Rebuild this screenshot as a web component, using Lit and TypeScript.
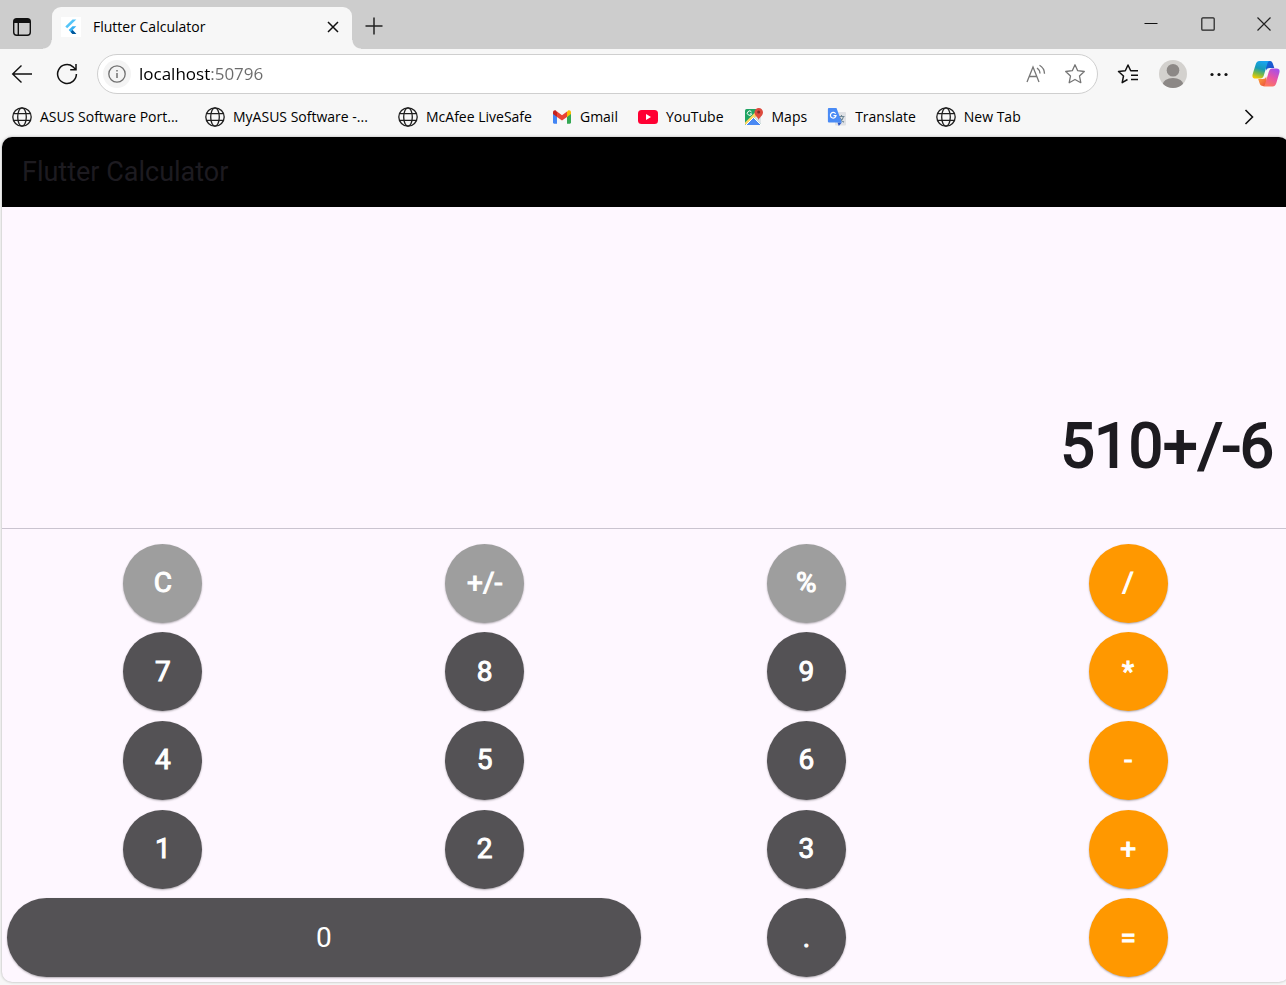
import { LitElement, html, css } from "lit";
import { customElement, property, state } from "lit/decorators.js";
import { classMap } from "lit/directives/class-map.js";

const globe = html`<svg width="20" height="20" viewBox="0 0 20 20" fill="none" stroke="#1f1f1f" stroke-width="1.3" aria-hidden="true">
  <circle cx="10" cy="10" r="9.2" />
  <ellipse cx="10" cy="10" rx="4.3" ry="9.2" />
  <path d="M1.6 6.7H18.4M1.6 13.3H18.4" />
</svg>`;

const gmail = html`<svg width="20" height="20" viewBox="0 0 20 20" aria-hidden="true">
  <path d="M1 5.2v10.3c0 .7.5 1.2 1.2 1.2H5V9.4z" fill="#4285f4" />
  <path d="M15 9.4v7.3h2.8c.7 0 1.2-.5 1.2-1.2V5.2z" fill="#34a853" />
  <path d="M15 4.7v5.2l4-3V5.3c0-1.700-1.900-2.500-3.100-1.500z" fill="#fbbc04" />
  <path d="M5 9.900V4.600l5 3.700 5-3.700v5.300l-5 3.700z" fill="#ea4335" />
  <path d="M1 5.300v1.600l4 3V4.700l-.9-.9C2.900 2.800 1 3.600 1 5.300z" fill="#c5221f" />
</svg>`;

const youtube = html`<svg width="20" height="20" viewBox="0 0 20 20" aria-hidden="true">
  <rect x="0" y="3" width="20" height="14" rx="3.500" fill="#ff0033" />
  <path d="M8 7v6l5-3z" fill="#fff" />
</svg>`;

const maps = html`<svg width="20" height="20" viewBox="0 0 20 20" aria-hidden="true">
  <rect x="1" y="2" width="16" height="16" rx="1.500" fill="#1fa463" />
  <path d="M17 5v12.500L10 10.500z" fill="#dfe3e6" />
  <path d="M1 15.500 13 3.500l2.500 2.500L3 18.200 1 17z" fill="#fdd663" />
  <path d="M2 18 9.500 10.500 17 18z" fill="#4a89f3" />
  <path d="M2 18 9.500 10.500 17 18" stroke="#fff" stroke-width="1" fill="none" />
  <path d="M7.500 5A2.200 2.200 0 1 0 7.700 6.900H6" fill="none" stroke="#fff" stroke-width="1" />
  <path d="M14.700 13.200c-.3-3-4.200-4.200-4.200-8A4.200 4.200 0 0 1 19 5.200c0 3.800-4 5-4.300 8z" fill="#dd4b3e" />
  <circle cx="14.700" cy="5" r="1.500" fill="#822b25" />
</svg>`;

const translate = html`<svg width="20" height="20" viewBox="0 0 20 20" aria-hidden="true">
  <rect x="8" y="5" width="11" height="13.500" rx="1" fill="#dfe1e5" />
  <path d="M11.500 9.500h6M14.500 8v1.500M16.500 9.700c-.6 2.600-2 4.300-4 5.600M12.800 10.500c.8 2 2.300 3.700 4.200 4.700" stroke="#6f8794" stroke-width="1.100" fill="none" />
  <path d="M10.500 15.500h4.300L11.800 19z" fill="#2a56c6" />
  <path d="M2 1h7.500l5.300 14.500H2A1.100 1.100 0 0 1 .9 14.400V2.100C.9 1.500 1.400 1 2 1z" fill="#4a8bf5" />
  <path d="M8.600 6.700A2.800 2.800 0 1 0 9 8.700H6.500" fill="none" stroke="#fff" stroke-width="1.200" />
</svg>`;

const bookmarks = [
  { label: "ASUS Software Port...", icon: globe, wide: true },
  { label: "MyASUS Software -...", icon: globe, wide: true },
  { label: "McAfee LiveSafe", icon: globe },
  { label: "Gmail", icon: gmail },
  { label: "YouTube", icon: youtube },
  { label: "Maps", icon: maps },
  { label: "Translate", icon: translate },
  { label: "New Tab", icon: globe },
];

@customElement("browser-chrome")
class BrowserChrome extends LitElement {
  @property() tabTitle = "";
  @property() address = "";

  static styles = css`
    :host {
      display: block;
      background: #f7f7f7;
      color: #000;
      font-family: "Open Sans", "Noto Sans", sans-serif;
      font-size: 14px;
    }
    * { box-sizing: border-box; }
    svg { display: block; flex: none; }
    button {
      display: grid;
      place-items: center;
      flex: none;
      border: 0;
      padding: 0;
      background: none;
      color: inherit;
      font: inherit;
    }
    .titlebar {
      display: flex;
      height: 49px;
      background: #cdcdcd;
    }
    .workspaces { width: 44px; padding-top: 4px; }
    .tab {
      position: relative;
      display: flex;
      align-items: center;
      width: 300px;
      height: 42px;
      margin: 7px 0 0 8px;
      padding: 0 9px 2px 9px;
      gap: 12px;
      background: #f7f7f7;
      border-radius: 9px 9px 0 0;
    }
    .tab::before,
    .tab::after {
      content: "";
      position: absolute;
      bottom: 0;
      width: 9px;
      height: 9px;
    }
    .tab::before {
      right: 100%;
      background: radial-gradient(circle at 0 0, transparent 8px, #f7f7f7 9px);
    }
    .tab::after {
      left: 100%;
      background: radial-gradient(circle at 100% 0, transparent 8px, #f7f7f7 9px);
    }
    .tab-title { flex: 1; padding-bottom: 2px; }
    .tab-close { width: 20px; height: 20px; }
    .new-tab { width: 44px; padding-top: 3px; }
    .window-buttons { display: flex; margin-left: auto; }
    .window-buttons button { width: 57px; height: 47px; }
    .window-buttons button:last-child { width: 50px; padding-left: 6px; }
    .toolbar {
      display: flex;
      align-items: center;
      height: 49px;
      padding-left: 10px;
    }
    .back { width: 24px; margin-right: 21px; }
    .reload { width: 24px; margin-right: 18px; }
    .address {
      display: flex;
      align-items: center;
      flex: 1;
      height: 40px;
      padding: 0 11px 0 5px;
      border: 1px solid #cfcfcf;
      border-radius: 20px;
      background: #fff;
    }
    .info {
      width: 28px;
      height: 28px;
      border-radius: 50%;
      background: #f4f4f4;
    }
    .url {
      flex: 1;
      min-width: 0;
      margin-left: 8px;
      padding: 0;
      border: 0;
      outline: 0;
      font: 17px/24px "Open Sans", "Noto Sans", sans-serif;
      color: #1a1a1a;
      background: linear-gradient(90deg, #000 71px, #6b6b6b 71px);
      -webkit-background-clip: text;
      background-clip: text;
      -webkit-text-fill-color: transparent;
    }
    .read { width: 22px; margin-right: 17px; }
    .star { width: 22px; }
    .favorites { width: 24px; margin: 0 19px 0 18px; }
    .profile { width: 28px; margin-right: 22px; }
    .more { width: 20px; margin-right: 22px; }
    .copilot { width: 30px; margin-right: 5px; }
    .bookmarks {
      display: flex;
      align-items: center;
      height: 39px;
      padding: 0 25px 2px 12px;
      gap: 20px;
    }
    .bookmark {
      display: flex;
      align-items: center;
      gap: 8px;
      color: inherit;
      text-decoration: none;
      white-space: nowrap;
    }
    .wide { width: 173px; }
    .overflow { width: 24px; margin-left: auto; }
  `;

  render() {
    return html`
      <header>
        <div class="titlebar">
          <button class="workspaces" aria-label="Tab actions">
            <svg width="20" height="20" viewBox="0 0 20 20" fill="none" stroke="#111" stroke-width="1.400">
              <rect x="1.700" y="1.700" width="16.600" height="16.600" rx="3" />
              <path d="M2 4h16" stroke-width="4" /><path d="M6.300 5v13" />
            </svg>
          </button>
          <div class="tab">
            <svg width="20" height="20" viewBox="0 0 20 20" aria-hidden="true">
              <rect width="20" height="20" fill="#fff" />
              <path d="M11.500 2.500h3.800L6.200 11.200 4.300 9.400z" fill="#54c5f8" />
              <path d="M11.500 9.300h3.800L11.600 13l3.700 3.900h-3.800L7.700 13z" fill="#38b1f3" />
              <path d="M9.600 14.900 11.600 13l3.700 3.900h-3.800z" fill="#01579b" />
            </svg>
            <span class="tab-title">${this.tabTitle}</span>
            <button class="tab-close" aria-label="Close tab">
              <svg width="12" height="12" viewBox="0 0 12 12" stroke="#111" stroke-width="1.500"><path d="M1 1l10 10M11 1 1 11" /></svg>
            </button>
          </div>
          <button class="new-tab" aria-label="New tab">
            <svg width="18" height="18" viewBox="0 0 18 18" stroke="#222" stroke-width="1.500"><path d="M9 .5v17M.5 9h17" /></svg>
          </button>
          <div class="window-buttons">
            <button aria-label="Minimize"><svg width="14" height="14" viewBox="0 0 14 14" stroke="#111"><path d="M.5 6.500h13" /></svg></button>
            <button aria-label="Maximize"><svg width="14" height="14" viewBox="0 0 14 14" fill="none" stroke="#222" stroke-width="1.200"><rect x=".8" y=".8" width="12.400" height="12.400" rx="1" /></svg></button>
            <button aria-label="Close"><svg width="14" height="14" viewBox="0 0 14 14" stroke="#222" stroke-width="1.200"><path d="M.5.5l13 13M13.500.5l-13 13" /></svg></button>
          </div>
        </div>
        <nav class="toolbar" aria-label="Navigation">
          <button class="back" aria-label="Back">
            <svg width="22" height="20" viewBox="0 0 22 20" fill="none" stroke="#111" stroke-width="1.400"><path d="M21 10H2M10.500 1.500 1.700 10l8.800 8.500" /></svg>
          </button>
          <button class="reload" aria-label="Refresh">
            <svg width="22" height="22" viewBox="0 0 22 22" fill="none" stroke="#111" stroke-width="1.500"><path d="M20.400 11A9.400 9.400 0 1 1 17 3.800L19.700 6.500M20 1v5.800h-5.800" /></svg>
          </button>
          <div class="address">
            <button class="info" aria-label="View site information">
              <svg width="18" height="18" viewBox="0 0 18 18" fill="none" stroke="#707070" stroke-width="1.300"><circle cx="9" cy="9" r="8.200" /><path d="M9 8v5M9 5v1.500" stroke-width="1.500" /></svg>
            </button>
            <input class="url" type="text" aria-label="Address" .value=${this.address} />
            <button class="read" aria-label="Read aloud">
              <svg width="22" height="20" viewBox="0 0 22 20" fill="none" stroke="#777" stroke-width="1.300"><path d="M2 18 8 3l6 15M4.200 12.500h7.600M12 4a7 7 0 0 1 3 5.500M14.500 1.200a10 10 0 0 1 5 8.500" /></svg>
            </button>
            <button class="star" aria-label="Add to favorites">
              <svg width="22" height="22" viewBox="0 0 22 22" fill="none" stroke="#757575" stroke-width="1.300" stroke-linejoin="round"><path d="M11 1.800 13.700 7.700 20.300 8.500 15.500 13 16.800 19.700 11 16.500 5.200 19.700 6.500 13 1.700 8.500 8.300 7.700z" /></svg>
            </button>
          </div>
          <button class="favorites" aria-label="Favorites">
            <svg width="22" height="22" viewBox="0 0 22 22" fill="none" stroke="#111" stroke-width="1.500" stroke-linejoin="round"><path d="M10.500 16.500 5.200 19.700 6.500 13 1.500 8.500 8.300 7.700 11 2 13.700 7.700H21M14 12.200h7M14 16.500h7" /></svg>
          </button>
          <button class="profile" aria-label="Profile">
            <svg width="28" height="28" viewBox="0 0 28 28">
              <defs><clipPath id="face"><circle cx="14" cy="14" r="14" /></clipPath></defs>
              <circle cx="14" cy="14" r="14" fill="#d3d1ce" />
              <g fill="#8c8886" clip-path="url(#face)"><circle cx="14" cy="10.300" r="6.300" /><ellipse cx="14" cy="25" rx="10.500" ry="7" /></g>
            </svg>
          </button>
          <button class="more" aria-label="Settings and more">
            <svg width="18" height="18" viewBox="0 0 18 18" fill="#111"><circle cx="2" cy="9.500" r="1.600" /><circle cx="9" cy="9.500" r="1.600" /><circle cx="16" cy="9.500" r="1.600" /></svg>
          </button>
          <button class="copilot" aria-label="Copilot">
            <svg width="28" height="28" viewBox="0 0 28 28">
              <defs>
                <linearGradient id="cool" x1=".6" y1="0" x2=".3" y2="1"><stop offset="0" stop-color="#18a4f2" /><stop offset=".45" stop-color="#179bb5" /><stop offset=".72" stop-color="#75b84a" /><stop offset="1" stop-color="#f3c900" /></linearGradient>
                <linearGradient id="warm" x1=".8" y1="0" x2=".3" y2="1"><stop offset="0" stop-color="#a24fee" /><stop offset=".5" stop-color="#e755a5" /><stop offset="1" stop-color="#ff7a59" /></linearGradient>
                <linearGradient id="deep" x1="0" y1="0" x2="1" y2="1"><stop offset="0" stop-color="#0b6fd8" /><stop offset="1" stop-color="#2349c9" /></linearGradient>
                <linearGradient id="ember" x1="0" y1="0" x2="1" y2="1"><stop offset="0" stop-color="#ffab38" /><stop offset="1" stop-color="#e9483f" /></linearGradient>
              </defs>
              <path d="M13 1h4.500c2 0 2.800 1 3.400 2.800L22.300 8h-4.500c-2 0-3 .8-3.500 2.500z" fill="url(#deep)" />
              <path d="M15.500 26H11c-2 0-2.800-1-3.400-2.800L6.200 19h4.500c2 0 3-.8 3.500-2.500z" fill="url(#ember)" />
              <path d="M7.500 1H18c-1.500 0-2.200 1-2.700 2.800L11.800 15.500c-.6 2-1.600 3-3.500 3H3.500C.5 18.500 0 16.500.7 14L3.500 5C4.300 2.300 5.300 1 7.500 1z" fill="url(#cool)" />
              <path d="M20.500 26.500H10.500c1.500 0 2.200-1 2.700-2.800L16.700 12c.6-2 1.600-3.500 3.500-3.500h4.300c3 0 3.500 2 2.800 4.500L24.500 22.500c-.8 2.700-1.800 4-4 4z" fill="url(#warm)" />
            </svg>
          </button>
        </nav>
        <nav class="bookmarks" aria-label="Favorites bar">
          ${bookmarks.map(
            (b) => html`<a class=${classMap({ bookmark: true, wide: !!b.wide })} href="#">${b.icon}<span>${b.label}</span></a>`
          )}
          <button class="overflow" aria-label="More favorites">
            <svg width="10" height="16" viewBox="0 0 10 16" fill="none" stroke="#111" stroke-width="1.600"><path d="M1.500 1 8.500 8l-7 7" /></svg>
          </button>
        </nav>
      </header>
    `;
  }
}

type Kind = "util" | "digit" | "op";
const keys: { label: string; kind: Kind }[] = [
  { label: "C", kind: "util" }, { label: "+/-", kind: "util" }, { label: "%", kind: "util" }, { label: "/", kind: "op" },
  { label: "7", kind: "digit" }, { label: "8", kind: "digit" }, { label: "9", kind: "digit" }, { label: "*", kind: "op" },
  { label: "4", kind: "digit" }, { label: "5", kind: "digit" }, { label: "6", kind: "digit" }, { label: "-", kind: "op" },
  { label: "1", kind: "digit" }, { label: "2", kind: "digit" }, { label: "3", kind: "digit" }, { label: "+", kind: "op" },
  { label: "0", kind: "digit" }, { label: ".", kind: "digit" }, { label: "=", kind: "op" },
];

@customElement("flutter-calculator")
class FlutterCalculator extends LitElement {
  @state() private entry = "510+/-6";

  static styles = css`
    :host {
      display: flex;
      flex-direction: column;
      overflow: hidden;
      border-radius: 10px;
      background: #fef7ff;
      color: #1d1b20;
      font-family: Roboto, sans-serif;
      box-shadow: 0 0 3px rgba(0, 0, 0, 0.3);
    }
    * { box-sizing: border-box; }
    .appbar {
      display: flex;
      align-items: center;
      height: 70px;
      padding: 0 20px;
      background: #000;
    }
    h1 { margin: 0; font-size: 27px; font-weight: 400; line-height: 36px; }
    .display {
      flex: 1;
      display: flex;
      align-items: flex-end;
      justify-content: flex-end;
      padding: 0 15px 44px;
      font-size: 61px;
      font-weight: 400;
      line-height: 76px;
      -webkit-text-stroke: 2px currentColor;
      border-bottom: 1px solid #cac4d0;
    }
    .pad {
      display: grid;
      grid-template-columns: repeat(4, 1fr);
      grid-template-rows: repeat(5, 1fr);
      height: 453px;
      padding-top: 10px;
      place-items: center;
    }
    .key {
      width: 79px;
      height: 79px;
      padding: 0;
      border: 0;
      border-radius: 40px;
      color: #fff;
      font: 400 28px/36px Roboto, sans-serif;
      -webkit-text-stroke: 1px currentColor;
      box-shadow: 0 1px 2px rgba(0, 0, 0, 0.3);
    }
    .util { background: #9e9e9e; }
    .digit { background: #545255; }
    .op { background: #ff9800; }
    .zero {
      grid-column: span 2;
      justify-self: stretch;
      width: auto;
      margin: 0 5px;
      -webkit-text-stroke: 0;
    }
  `;

  private press(label: string) {
    if (label === "C") this.entry = "";
    else if (label !== "=") this.entry += label;
  }

  render() {
    return html`
      <header class="appbar"><h1>Flutter Calculator</h1></header>
      <output class="display">${this.entry}</output>
      <div class="pad">
        ${keys.map(
          (k) => html`<button
            class=${classMap({ key: true, [k.kind]: true, zero: k.label === "0" })}
            @click=${() => this.press(k.label)}
          >${k.label}</button>`
        )}
      </div>
    `;
  }
}

@customElement("app-root")
class AppRoot extends LitElement {
  static styles = css`
    :host {
      display: flex;
      flex-direction: column;
      min-height: 100vh;
      overflow: hidden;
      background: #f7f7f7;
    }
    .page { flex: 1; margin: 0 -3px 3px 2px; }
  `;

  render() {
    return html`
      <browser-chrome tabTitle="Flutter Calculator" address="localhost:50796"></browser-chrome>
      <flutter-calculator class="page"></flutter-calculator>
    `;
  }
}
